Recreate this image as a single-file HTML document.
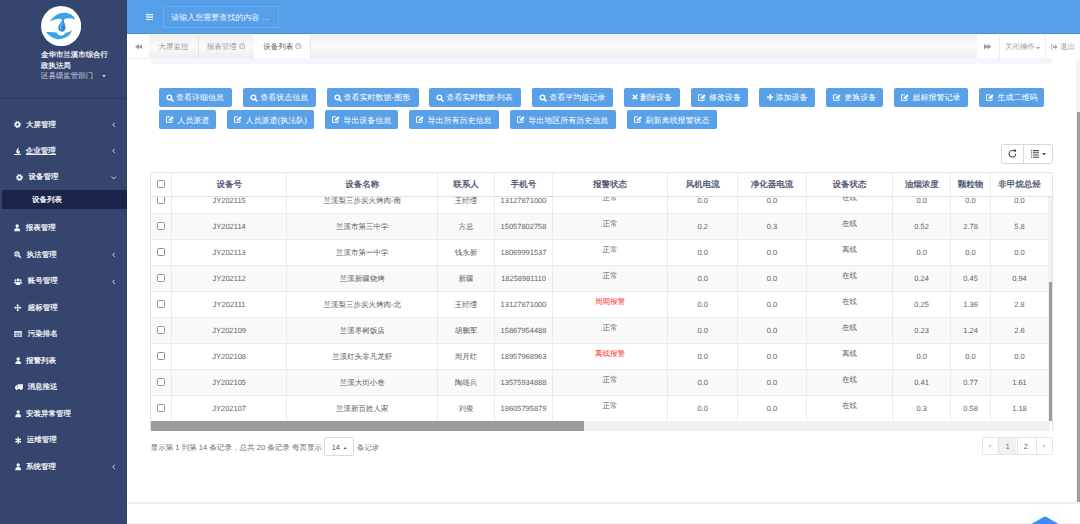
<!DOCTYPE html><html><head><meta charset="utf-8"><style>
*{box-sizing:border-box}
html,body{margin:0;padding:0}
body{width:1080px;height:524px;overflow:hidden;position:relative;background:#fff;font-family:"Liberation Sans",sans-serif;text-rendering:geometricPrecision}
.abs{position:absolute}
.t{position:absolute;white-space:nowrap;line-height:12px;height:12px}
.btn{position:absolute;height:18.9px;background:#58a0e8;border-radius:2px;color:#fff;font-size:8px;line-height:12px;white-space:nowrap}
.btn span{position:absolute;top:4.2px}
.mi{position:absolute;left:0;width:127px;height:14px;color:#f0f2f7;font-size:7.5px;font-weight:bold;line-height:14px;white-space:nowrap}
.mi .ic{position:absolute;top:0;height:14px;display:flex;align-items:center}
.mi .tx{position:absolute;top:0}
.mi .ar{position:absolute;left:111.8px;top:0;height:14px;display:flex;align-items:center}
.cell{position:absolute;height:12px;line-height:12px;text-align:center;font-size:7.5px;color:#5d6063;white-space:nowrap}
.hd{position:absolute;height:12px;line-height:12px;text-align:center;font-size:8.5px;font-weight:bold;color:#555c74;white-space:nowrap}
</style></head><body>
<div class="abs" style="left:0;top:0;width:127px;height:524px;background:rgb(54,69,109)">
<svg class="abs" style="left:41.2px;top:5.8px" width="40.2" height="40.2" viewBox="0 0 40 40"><circle cx="20" cy="20" r="20" fill="#fff"/><path d="M9 15.2C11 12 14.5 8.8 18.5 7.5C21.5 6.5 25 6.3 28.5 7.6C31 8.6 33 10.8 34.2 13.8C32 12.6 29.5 12 26.5 12.2C24.5 12.4 23 13.2 21.8 14.6C20.5 13 18.5 12.5 16 13C13.5 13.6 11 14.5 9 15.2Z" fill="#3aa5e6"/><path d="M5 26C7.5 29.5 11 32 15.5 32.8C20 33.5 25 32 28 29.2C29.5 27.6 30.3 26 30.8 24.2C28.5 25.8 26.5 26.3 24.6 26.6C23.5 28.2 22 29.3 19.8 29.3C17.5 29.3 16 27.8 15.6 26.3C12 25.7 8.5 25.6 5 26Z" fill="#3aa5e6"/><path d="M22.5 12.5C20.5 15.5 17.2 18.8 17.2 22C17.2 24.2 18.8 25.6 20.8 25.6C22.8 25.6 24.4 24.2 24.4 21.8C24.4 18.8 22.5 16 22.5 12.5Z" fill="#2e8ad6"/><path d="M21.6 16.5C20.2 18.3 19.3 19.8 19.3 21.5C19.3 22.5 19.8 23.2 20.4 23.4" fill="none" stroke="#8cc8f0" stroke-width="1"/></svg>
<div class="t" style="left:41px;top:48.8px;color:#f0f2f7;font-size:7.45px;font-weight:bold;line-height:11px;height:auto">金华市兰溪市综合行<br>政执法局</div>
<div class="t" style="left:41px;top:70px;color:#cdd3df;font-size:7.45px;line-height:11px;height:11px">区县级监管部门</div>
<svg class="abs" style="left:101.6px;top:75.2px" width="4" height="2.4" viewBox="0 0 8 5"><path d="M0 0H8L4 5Z" fill="#cdd3df"/></svg>
<div class="abs" style="left:0;top:97.6px;width:127px;height:1px;background:rgb(45,58,94)"></div>
<div class="abs" style="left:2px;top:190.2px;width:125px;height:18.6px;background:rgb(27,36,73)"></div>
<div class="mi" style="top:117.8px"><span class="ic" style="left:14.3px"><svg width="7" height="7" viewBox="0 0 14 14"><circle cx="7" cy="7" r="3.8" fill="none" stroke="#f3f5f9" stroke-width="3"/><circle cx="7" cy="7" r="5.8" fill="none" stroke="#f3f5f9" stroke-width="2.4" stroke-dasharray="2.3 2.25"/></svg></span><span class="tx" style="left:26px">大屏管理</span>
<span class="ar"><svg width="3.6" height="5.6" viewBox="0 0 7 11"><path d="M5.8 1L1.5 5.5L5.8 10" fill="none" stroke="#dfe3ea" stroke-width="1.8"/></svg></span>
</div>
<div class="mi" style="top:143.9px"><span class="ic" style="left:14.5px"><svg width="6" height="8" viewBox="0 0 12 16"><path d="M7.5 0.5C4.5 4 2 6.5 2.5 10C3 13 5.5 14.2 8 13.2C10.5 12 10.5 9 9.2 7C8.5 8.5 7.5 9 6.5 8.8C7.5 6 6.8 3.5 7.5 0.5Z" fill="#f3f5f9"/></svg></span><span class="tx" style="left:25.8px">企业管理</span>
<span class="ar"><svg width="3.6" height="5.6" viewBox="0 0 7 11"><path d="M5.8 1L1.5 5.5L5.8 10" fill="none" stroke="#dfe3ea" stroke-width="1.8"/></svg></span>
</div>
<div class="mi" style="top:170.4px"><span class="ic" style="left:16.2px"><svg width="7" height="7" viewBox="0 0 14 14"><circle cx="7" cy="7" r="3.8" fill="none" stroke="#f3f5f9" stroke-width="3"/><circle cx="7" cy="7" r="5.8" fill="none" stroke="#f3f5f9" stroke-width="2.4" stroke-dasharray="2.3 2.25"/></svg></span><span class="tx" style="left:28.6px">设备管理</span>
<span class="ar" style="left:110.6px"><svg width="5.6" height="3.6" viewBox="0 0 11 7"><path d="M1 1.2L5.5 5.5L10 1.2" fill="none" stroke="#dfe3ea" stroke-width="1.8"/></svg></span>
</div>
<div class="mi" style="top:221.0px"><span class="ic" style="left:14.3px"><svg width="6.4" height="7.4" viewBox="0 0 13 15"><circle cx="6.5" cy="4" r="3.4" fill="#f3f5f9"/><path d="M0.5 14.5C0.5 10 2.5 8 6.5 8C10.5 8 12.5 10 12.5 14.5Z" fill="#f3f5f9"/></svg></span><span class="tx" style="left:25.8px">报表管理</span>
</div>
<div class="mi" style="top:248.0px"><span class="ic" style="left:14.2px"><svg width="7.4" height="7.4" viewBox="0 0 15 15"><circle cx="6" cy="6" r="4.3" fill="none" stroke="#f3f5f9" stroke-width="2.2"/><path d="M9.3 9.3L13.8 13.8" stroke="#f3f5f9" stroke-width="3"/><path d="M3.8 6H8.2M6 3.8V8.2" stroke="#f3f5f9" stroke-width="1.5"/></svg></span><span class="tx" style="left:26.7px">执法管理</span>
<span class="ar"><svg width="3.6" height="5.6" viewBox="0 0 7 11"><path d="M5.8 1L1.5 5.5L5.8 10" fill="none" stroke="#dfe3ea" stroke-width="1.8"/></svg></span>
</div>
<div class="mi" style="top:274.3px"><span class="ic" style="left:14.2px"><svg width="8.2" height="7.4" viewBox="0 0 17 15"><circle cx="8.5" cy="3.6" r="2.8" fill="#f3f5f9"/><circle cx="3.2" cy="4.6" r="2.1" fill="#f3f5f9"/><circle cx="13.8" cy="4.6" r="2.1" fill="#f3f5f9"/><path d="M3.8 14.5C3.8 9.5 5.5 7.3 8.5 7.3C11.5 7.3 13.2 9.5 13.2 14.5Z" fill="#f3f5f9"/><path d="M0 11.5C0 8.5 1.5 7.3 3.2 7.3C4.2 7.3 4.8 7.7 5.2 8.2L3.5 11.5Z" fill="#f3f5f9"/><path d="M17 11.5C17 8.5 15.5 7.3 13.8 7.3C12.8 7.3 12.2 7.7 11.8 8.2L13.5 11.5Z" fill="#f3f5f9"/></svg></span><span class="tx" style="left:27.7px">账号管理</span>
<span class="ar"><svg width="3.6" height="5.6" viewBox="0 0 7 11"><path d="M5.8 1L1.5 5.5L5.8 10" fill="none" stroke="#dfe3ea" stroke-width="1.8"/></svg></span>
</div>
<div class="mi" style="top:300.9px"><span class="ic" style="left:14.2px"><svg width="7.4" height="7.4" viewBox="0 0 15 15"><path d="M7.5 2V13M2 7.5H13" stroke="#f3f5f9" stroke-width="2.2"/><path d="M7.5 0L4.5 3.3H10.5Z M7.5 15L4.5 11.7H10.5Z M0 7.5L3.3 4.5V10.5Z M15 7.5L11.7 4.5V10.5Z" fill="#f3f5f9"/></svg></span><span class="tx" style="left:27.7px">超标管理</span>
</div>
<div class="mi" style="top:326.9px"><span class="ic" style="left:14.3px"><svg width="8" height="6.4" viewBox="0 0 16 13"><rect x="0" y="0" width="16" height="13" fill="#f3f5f9" opacity="0.85"/><path d="M0.8 4.5H15.2M0.8 8.5H15.2M5.5 4.5V12.2M10.5 4.5V12.2" stroke="rgb(54,69,109)" stroke-width="1"/></svg></span><span class="tx" style="left:27.7px">污染排名</span>
</div>
<div class="mi" style="top:353.7px"><span class="ic" style="left:14.5px"><svg width="6.4" height="7.4" viewBox="0 0 13 15"><circle cx="6.5" cy="4" r="3.4" fill="#f3f5f9"/><path d="M0.5 14.5C0.5 10 2.5 8 6.5 8C10.5 8 12.5 10 12.5 14.5Z" fill="#f3f5f9"/></svg></span><span class="tx" style="left:26px">报警列表</span>
</div>
<div class="mi" style="top:380.2px"><span class="ic" style="left:14.5px"><svg width="8" height="6.4" viewBox="0 0 16 13"><path d="M5 0.5H16V10H5Z M0 5.5L2.5 2.5H4.5V10H0Z" fill="#f3f5f9"/><circle cx="3.5" cy="11" r="1.8" fill="#f3f5f9"/><circle cx="12" cy="11" r="1.8" fill="#f3f5f9"/></svg></span><span class="tx" style="left:27.5px">消息推送</span>
</div>
<div class="mi" style="top:406.9px"><span class="ic" style="left:14.5px"><svg width="6.4" height="7.4" viewBox="0 0 13 15"><circle cx="6.5" cy="4" r="3.4" fill="#f3f5f9"/><path d="M0.5 14.5C0.5 10 2.5 8 6.5 8C10.5 8 12.5 10 12.5 14.5Z" fill="#f3f5f9"/></svg></span><span class="tx" style="left:26px">安装异常管理</span>
</div>
<div class="mi" style="top:433.3px"><span class="ic" style="left:15px"><svg width="6.4" height="7" viewBox="0 0 13 14"><path d="M6.5 0.5V13.5M1 3.8L12 10.2M12 3.8L1 10.2" stroke="#f3f5f9" stroke-width="2.8"/></svg></span><span class="tx" style="left:26.7px">运维管理</span>
</div>
<div class="mi" style="top:459.9px"><span class="ic" style="left:14.5px"><svg width="6.4" height="7.4" viewBox="0 0 13 15"><circle cx="6.5" cy="4" r="3.4" fill="#f3f5f9"/><path d="M0.5 14.5C0.5 10 2.5 8 6.5 8C10.5 8 12.5 10 12.5 14.5Z" fill="#f3f5f9"/></svg></span><span class="tx" style="left:26px">系统管理</span>
<span class="ar"><svg width="3.6" height="5.6" viewBox="0 0 7 11"><path d="M5.8 1L1.5 5.5L5.8 10" fill="none" stroke="#dfe3ea" stroke-width="1.8"/></svg></span>
</div>
<div class="mi" style="top:192.8px"><span class="tx" style="left:32px">设备列表</span></div>
<div class="abs" style="left:14.3px;top:153.9px;width:6.5px;height:0.8px;background:#e6e9f0"></div>
<div class="abs" style="left:25.8px;top:153.9px;width:30.5px;height:0.8px;background:#e6e9f0"></div>
</div>
<div class="abs" style="left:127px;top:0;width:953px;height:34.4px;background:#56a0e9;border-bottom:0.6px solid #4a93e0"></div>
<svg class="abs" style="left:146px;top:13.8px" width="7.3" height="6.2" viewBox="0 0 14 12"><path d="M0 1.2H14M0 6H14M0 10.8H14" stroke="#fff" stroke-width="2.2"/></svg>
<div class="abs" style="left:163px;top:5.8px;width:116px;height:22.5px;border:0.8px solid rgba(255,255,255,0.14)"></div>
<div class="t" style="left:171.2px;top:12px;font-size:8px;color:#eef4fc">请输入您需要查找的内容 …</div>
<div class="abs" style="left:149px;top:34.6px;width:828px;height:23.3px;background:linear-gradient(#eeeeee,#fbfbfb 50%,#eeeeee)"></div>
<div class="abs" style="left:197.6px;top:34.6px;width:1px;height:23.3px;background:#e4e4e4"></div>
<div class="abs" style="left:254.4px;top:34.6px;width:55.8px;height:23.3px;background:#fff"></div>
<div class="abs" style="left:310.2px;top:34.6px;width:1px;height:23.3px;background:#e8e8e8"></div>
<div class="abs" style="left:999.4px;top:34.6px;width:0.8px;height:23.3px;background:#ebebeb"></div>
<div class="abs" style="left:1045.3px;top:34.6px;width:0.8px;height:23.3px;background:#ebebeb"></div>
<div class="abs" style="left:127px;top:57.6px;width:22px;height:0.6px;background:#eeeeee"></div>
<div class="t" style="left:158.5px;top:41.1px;font-size:7.5px;color:#949494">大屏监控</div>
<div class="t" style="left:206.7px;top:41.1px;font-size:7.5px;color:#949494">报表管理</div>
<div class="t" style="left:263.3px;top:41.1px;font-size:7.5px;color:#555">设备列表</div>
<svg class="abs" style="left:238.9px;top:43px" width="6.4" height="6.4" viewBox="0 0 12 12"><circle cx="6" cy="6" r="4.8" fill="none" stroke="#c2c2c2" stroke-width="2.2"/><path d="M4.2 4.2L7.8 7.8M7.8 4.2L4.2 7.8" stroke="#c2c2c2" stroke-width="1.6"/></svg>
<svg class="abs" style="left:295.3px;top:43px" width="6.4" height="6.4" viewBox="0 0 12 12"><circle cx="6" cy="6" r="4.8" fill="none" stroke="#c2c2c2" stroke-width="2.2"/><path d="M4.2 4.2L7.8 7.8M7.8 4.2L4.2 7.8" stroke="#c2c2c2" stroke-width="1.6"/></svg>
<svg class="abs" style="left:134.6px;top:44.4px" width="7.6" height="5.4" viewBox="0 0 14 10"><path d="M7.5 0L0 5L7.5 10Z M14 0L6.5 5L14 10Z" fill="#999999"/></svg>
<svg class="abs" style="left:983.8px;top:44.2px" width="7.4" height="5.4" viewBox="0 0 14 10"><path d="M0 0L7.5 5L0 10Z M6.5 0L14 5L6.5 10Z" fill="#999999"/></svg>
<div class="t" style="left:1005px;top:41.1px;font-size:7.5px;color:#a0a0a0">关闭操作</div>
<svg class="abs" style="left:1035.8px;top:46.6px" width="4" height="2.4" viewBox="0 0 8 5"><path d="M0 0H8L4 5Z" fill="#a0a0a0"/></svg>
<svg class="abs" style="left:1050.9px;top:43.6px" width="7" height="6" viewBox="0 0 14 12"><path d="M5 1.5H1.2V10.5H5" fill="none" stroke="#a8a8a8" stroke-width="1.6"/><path d="M4.2 4.2H8.2V1L13.6 6L8.2 11V7.8H4.2Z" fill="#a8a8a8"/></svg>
<div class="t" style="left:1060px;top:41.1px;font-size:7.5px;color:#a0a0a0">退出</div>
<div class="abs" style="left:151px;top:58.2px;width:901.2px;height:6.2px;background:#f3f6fc"></div>
<div class="btn" style="left:159px;top:87.9px;width:72.7px"><svg width="8" height="8" viewBox="0 0 16 16" style="position:absolute;left:7px;top:6.2px"><circle cx="6.8" cy="6.8" r="4.6" fill="none" stroke="#fff" stroke-width="2.8"/><path d="M10.2 10.2L14 14" stroke="#fff" stroke-width="3" stroke-linecap="round"/></svg><span style="left:16.9px">查看详细信息</span></div>
<div class="btn" style="left:243.3px;top:87.9px;width:72.4px"><svg width="8" height="8" viewBox="0 0 16 16" style="position:absolute;left:7px;top:6.2px"><circle cx="6.8" cy="6.8" r="4.6" fill="none" stroke="#fff" stroke-width="2.8"/><path d="M10.2 10.2L14 14" stroke="#fff" stroke-width="3" stroke-linecap="round"/></svg><span style="left:16.9px">查看状态信息</span></div>
<div class="btn" style="left:326.7px;top:87.9px;width:92.0px"><svg width="8" height="8" viewBox="0 0 16 16" style="position:absolute;left:7px;top:6.2px"><circle cx="6.8" cy="6.8" r="4.6" fill="none" stroke="#fff" stroke-width="2.8"/><path d="M10.2 10.2L14 14" stroke="#fff" stroke-width="3" stroke-linecap="round"/></svg><span style="left:16.9px">查看实时数据-图形</span></div>
<div class="btn" style="left:429.3px;top:87.9px;width:91.7px"><svg width="8" height="8" viewBox="0 0 16 16" style="position:absolute;left:7px;top:6.2px"><circle cx="6.8" cy="6.8" r="4.6" fill="none" stroke="#fff" stroke-width="2.8"/><path d="M10.2 10.2L14 14" stroke="#fff" stroke-width="3" stroke-linecap="round"/></svg><span style="left:16.9px">查看实时数据-列表</span></div>
<div class="btn" style="left:532.3px;top:87.9px;width:80.4px"><svg width="8" height="8" viewBox="0 0 16 16" style="position:absolute;left:7px;top:6.2px"><circle cx="6.8" cy="6.8" r="4.6" fill="none" stroke="#fff" stroke-width="2.8"/><path d="M10.2 10.2L14 14" stroke="#fff" stroke-width="3" stroke-linecap="round"/></svg><span style="left:16.9px">查看平均值记录</span></div>
<div class="btn" style="left:624.3px;top:87.9px;width:55.7px"><svg width="6" height="6" viewBox="0 0 12 12" style="position:absolute;left:7.8px;top:6.6px"><path d="M1.5 1.5L10.5 10.5M10.5 1.5L1.5 10.5" stroke="#fff" stroke-width="3.2"/></svg><span style="left:15.8px">删除设备</span></div>
<div class="btn" style="left:690.7px;top:87.9px;width:57.6px"><svg width="8.4" height="7" viewBox="0 0 17 14" style="position:absolute;left:7.2px;top:6px"><path d="M8 1.5H1.2V12.8H12.2V7.5" fill="none" stroke="#fff" stroke-width="1.9"/><path d="M5.5 9.5L6.2 6.5L12.5 0.3L15.5 3.3L9 9.3Z" fill="#fff"/></svg><span style="left:18.2px">修改设备</span></div>
<div class="btn" style="left:759.3px;top:87.9px;width:55.7px"><svg width="6.6" height="6.6" viewBox="0 0 13 13" style="position:absolute;left:7.3px;top:6.2px"><path d="M6.5 0V13M0 6.5H13" stroke="#fff" stroke-width="3.2"/></svg><span style="left:16.1px">添加设备</span></div>
<div class="btn" style="left:826px;top:87.9px;width:56.8px"><svg width="8.4" height="7" viewBox="0 0 17 14" style="position:absolute;left:7.2px;top:6px"><path d="M8 1.5H1.2V12.8H12.2V7.5" fill="none" stroke="#fff" stroke-width="1.9"/><path d="M5.5 9.5L6.2 6.5L12.5 0.3L15.5 3.3L9 9.3Z" fill="#fff"/></svg><span style="left:18.2px">更换设备</span></div>
<div class="btn" style="left:894.2px;top:87.9px;width:73.8px"><svg width="8.4" height="7" viewBox="0 0 17 14" style="position:absolute;left:7.2px;top:6px"><path d="M8 1.5H1.2V12.8H12.2V7.5" fill="none" stroke="#fff" stroke-width="1.9"/><path d="M5.5 9.5L6.2 6.5L12.5 0.3L15.5 3.3L9 9.3Z" fill="#fff"/></svg><span style="left:18.2px">超标报警记录</span></div>
<div class="btn" style="left:979.2px;top:87.9px;width:64.8px"><svg width="8.4" height="7" viewBox="0 0 17 14" style="position:absolute;left:7.2px;top:6px"><path d="M8 1.5H1.2V12.8H12.2V7.5" fill="none" stroke="#fff" stroke-width="1.9"/><path d="M5.5 9.5L6.2 6.5L12.5 0.3L15.5 3.3L9 9.3Z" fill="#fff"/></svg><span style="left:18.2px">生成二维码</span></div>
<div class="btn" style="left:159px;top:110.4px;width:57.0px"><svg width="8.4" height="7" viewBox="0 0 17 14" style="position:absolute;left:7.2px;top:6px"><path d="M8 1.5H1.2V12.8H12.2V7.5" fill="none" stroke="#fff" stroke-width="1.9"/><path d="M5.5 9.5L6.2 6.5L12.5 0.3L15.5 3.3L9 9.3Z" fill="#fff"/></svg><span style="left:18.2px">人员派遣</span></div>
<div class="btn" style="left:227.3px;top:110.4px;width:86.7px"><svg width="8.4" height="7" viewBox="0 0 17 14" style="position:absolute;left:7.2px;top:6px"><path d="M8 1.5H1.2V12.8H12.2V7.5" fill="none" stroke="#fff" stroke-width="1.9"/><path d="M5.5 9.5L6.2 6.5L12.5 0.3L15.5 3.3L9 9.3Z" fill="#fff"/></svg><span style="left:18.2px">人员派遣(执法队)</span></div>
<div class="btn" style="left:325px;top:110.4px;width:73.3px"><svg width="8.4" height="7" viewBox="0 0 17 14" style="position:absolute;left:7.2px;top:6px"><path d="M8 1.5H1.2V12.8H12.2V7.5" fill="none" stroke="#fff" stroke-width="1.9"/><path d="M5.5 9.5L6.2 6.5L12.5 0.3L15.5 3.3L9 9.3Z" fill="#fff"/></svg><span style="left:18.2px">导出设备信息</span></div>
<div class="btn" style="left:409.3px;top:110.4px;width:90.0px"><svg width="8.4" height="7" viewBox="0 0 17 14" style="position:absolute;left:7.2px;top:6px"><path d="M8 1.5H1.2V12.8H12.2V7.5" fill="none" stroke="#fff" stroke-width="1.9"/><path d="M5.5 9.5L6.2 6.5L12.5 0.3L15.5 3.3L9 9.3Z" fill="#fff"/></svg><span style="left:18.2px">导出所有历史信息</span></div>
<div class="btn" style="left:510px;top:110.4px;width:106.0px"><svg width="8.4" height="7" viewBox="0 0 17 14" style="position:absolute;left:7.2px;top:6px"><path d="M8 1.5H1.2V12.8H12.2V7.5" fill="none" stroke="#fff" stroke-width="1.9"/><path d="M5.5 9.5L6.2 6.5L12.5 0.3L15.5 3.3L9 9.3Z" fill="#fff"/></svg><span style="left:18.2px">导出地区所有历史信息</span></div>
<div class="btn" style="left:627.3px;top:110.4px;width:89.4px"><svg width="8.4" height="7" viewBox="0 0 17 14" style="position:absolute;left:7.2px;top:6px"><path d="M8 1.5H1.2V12.8H12.2V7.5" fill="none" stroke="#fff" stroke-width="1.9"/><path d="M5.5 9.5L6.2 6.5L12.5 0.3L15.5 3.3L9 9.3Z" fill="#fff"/></svg><span style="left:18.2px">刷新离线报警状态</span></div>
<div class="abs" style="left:1001.3px;top:144.1px;width:52.2px;height:19.5px;border:0.9px solid #d9d9d9;border-radius:2.5px;background:#fff"></div>
<div class="abs" style="left:1023.1px;top:144.1px;width:0.9px;height:19.5px;background:#d9d9d9"></div>
<svg class="abs" style="left:1008.2px;top:148.7px" width="8.6" height="9" viewBox="0 0 16 17"><path d="M14.3 9A6.2 6.2 0 1 1 11.6 3.9" fill="none" stroke="#3d4150" stroke-width="1.9"/><path d="M9.3 1.2L15.2 0.8L14.6 6.8Z" fill="#3d4150"/></svg>
<svg class="abs" style="left:1030.8px;top:149.8px" width="8.4" height="7.8" viewBox="0 0 16 15"><path d="M0 1.2H2M0 5.4H2M0 9.6H2M0 13.8H2M3.5 1.2H16M3.5 5.4H16M3.5 9.6H16M3.5 13.8H16" stroke="#4a4a5a" stroke-width="2"/></svg>
<svg class="abs" style="left:1041.7px;top:152.9px" width="4.2" height="2.4" viewBox="0 0 8 5"><path d="M0 0H8L4 5Z" fill="#4a4a55"/></svg>
<div class="abs" style="left:149.9px;top:172.2px;width:903.3px;height:259.3px;border:0.9px solid #e2e2e2;border-bottom:none;border-radius:3px 3px 0 0;overflow:hidden;background:#fff">
<div class="abs" style="left:0;top:14.0px;width:897.6px;height:26px;background:#fff;border-top:0.9px solid #eaeaea"></div>
<div class="abs" style="left:0;top:40.0px;width:897.6px;height:26px;background:#f9f9f9;border-top:0.9px solid #eaeaea"></div>
<div class="abs" style="left:0;top:66.0px;width:897.6px;height:26px;background:#fff;border-top:0.9px solid #eaeaea"></div>
<div class="abs" style="left:0;top:92.0px;width:897.6px;height:26px;background:#f9f9f9;border-top:0.9px solid #eaeaea"></div>
<div class="abs" style="left:0;top:118.0px;width:897.6px;height:26px;background:#fff;border-top:0.9px solid #eaeaea"></div>
<div class="abs" style="left:0;top:144.0px;width:897.6px;height:26px;background:#f9f9f9;border-top:0.9px solid #eaeaea"></div>
<div class="abs" style="left:0;top:170.0px;width:897.6px;height:26px;background:#fff;border-top:0.9px solid #eaeaea"></div>
<div class="abs" style="left:0;top:196.0px;width:897.6px;height:26px;background:#f9f9f9;border-top:0.9px solid #eaeaea"></div>
<div class="abs" style="left:0;top:222.0px;width:897.6px;height:26px;background:#fff;border-top:0.9px solid #eaeaea"></div>
<div class="abs" style="left:20.2px;top:0;width:0.9px;height:248px;background:#ebebeb"></div>
<div class="abs" style="left:135.5px;top:0;width:0.9px;height:248px;background:#ebebeb"></div>
<div class="abs" style="left:286.3px;top:0;width:0.9px;height:248px;background:#ebebeb"></div>
<div class="abs" style="left:343.2px;top:0;width:0.9px;height:248px;background:#ebebeb"></div>
<div class="abs" style="left:401.3px;top:0;width:0.9px;height:248px;background:#ebebeb"></div>
<div class="abs" style="left:516.3px;top:0;width:0.9px;height:248px;background:#ebebeb"></div>
<div class="abs" style="left:586.4px;top:0;width:0.9px;height:248px;background:#ebebeb"></div>
<div class="abs" style="left:655.2px;top:0;width:0.9px;height:248px;background:#ebebeb"></div>
<div class="abs" style="left:741.3px;top:0;width:0.9px;height:248px;background:#ebebeb"></div>
<div class="abs" style="left:799.4px;top:0;width:0.9px;height:248px;background:#ebebeb"></div>
<div class="abs" style="left:839.1px;top:0;width:0.9px;height:248px;background:#ebebeb"></div>
<div class="abs" style="left:6.2px;top:23.0px;width:7.6px;height:7.6px;border:0.9px solid #8f8f8f;border-radius:1.5px;background:#fff"></div>
<div class="cell" style="left:20.6px;top:21.9px;width:115.3px;">JY202115</div>
<div class="cell" style="left:135.9px;top:21.5px;width:150.8px;">兰溪梨三步炭火烤肉-南</div>
<div class="cell" style="left:286.7px;top:21.5px;width:56.9px;">王经理</div>
<div class="cell" style="left:343.6px;top:21.9px;width:58.1px;">13127871000</div>
<div class="cell" style="left:401.7px;top:18.7px;width:115.0px;">正常</div>
<div class="cell" style="left:516.7px;top:21.9px;width:70.1px;">0.0</div>
<div class="cell" style="left:586.8px;top:21.9px;width:68.8px;">0.0</div>
<div class="cell" style="left:655.6px;top:18.7px;width:86.1px;">在线</div>
<div class="cell" style="left:741.7px;top:21.9px;width:58.1px;">0.0</div>
<div class="cell" style="left:799.8px;top:21.9px;width:39.7px;">0.0</div>
<div class="cell" style="left:839.5px;top:21.9px;width:58.1px;">0.0</div>
<div class="abs" style="left:6.2px;top:49.0px;width:7.6px;height:7.6px;border:0.9px solid #8f8f8f;border-radius:1.5px;background:#fff"></div>
<div class="cell" style="left:20.6px;top:47.9px;width:115.3px;">JY202114</div>
<div class="cell" style="left:135.9px;top:47.5px;width:150.8px;">兰溪市第三中学</div>
<div class="cell" style="left:286.7px;top:47.5px;width:56.9px;">方总</div>
<div class="cell" style="left:343.6px;top:47.9px;width:58.1px;">15057802758</div>
<div class="cell" style="left:401.7px;top:44.7px;width:115.0px;">正常</div>
<div class="cell" style="left:516.7px;top:47.9px;width:70.1px;">0.2</div>
<div class="cell" style="left:586.8px;top:47.9px;width:68.8px;">0.3</div>
<div class="cell" style="left:655.6px;top:44.7px;width:86.1px;">在线</div>
<div class="cell" style="left:741.7px;top:47.9px;width:58.1px;">0.52</div>
<div class="cell" style="left:799.8px;top:47.9px;width:39.7px;">2.78</div>
<div class="cell" style="left:839.5px;top:47.9px;width:58.1px;">5.8</div>
<div class="abs" style="left:6.2px;top:75.0px;width:7.6px;height:7.6px;border:0.9px solid #8f8f8f;border-radius:1.5px;background:#fff"></div>
<div class="cell" style="left:20.6px;top:73.9px;width:115.3px;">JY202113</div>
<div class="cell" style="left:135.9px;top:73.5px;width:150.8px;">兰溪市第一中学</div>
<div class="cell" style="left:286.7px;top:73.5px;width:56.9px;">钱永新</div>
<div class="cell" style="left:343.6px;top:73.9px;width:58.1px;">18069991537</div>
<div class="cell" style="left:401.7px;top:70.7px;width:115.0px;">正常</div>
<div class="cell" style="left:516.7px;top:73.9px;width:70.1px;">0.0</div>
<div class="cell" style="left:586.8px;top:73.9px;width:68.8px;">0.0</div>
<div class="cell" style="left:655.6px;top:70.7px;width:86.1px;">离线</div>
<div class="cell" style="left:741.7px;top:73.9px;width:58.1px;">0.0</div>
<div class="cell" style="left:799.8px;top:73.9px;width:39.7px;">0.0</div>
<div class="cell" style="left:839.5px;top:73.9px;width:58.1px;">0.0</div>
<div class="abs" style="left:6.2px;top:101.0px;width:7.6px;height:7.6px;border:0.9px solid #8f8f8f;border-radius:1.5px;background:#fff"></div>
<div class="cell" style="left:20.6px;top:99.9px;width:115.3px;">JY202112</div>
<div class="cell" style="left:135.9px;top:99.5px;width:150.8px;">兰溪新疆烧烤</div>
<div class="cell" style="left:286.7px;top:99.5px;width:56.9px;">新疆</div>
<div class="cell" style="left:343.6px;top:99.9px;width:58.1px;">18258981110</div>
<div class="cell" style="left:401.7px;top:96.7px;width:115.0px;">正常</div>
<div class="cell" style="left:516.7px;top:99.9px;width:70.1px;">0.0</div>
<div class="cell" style="left:586.8px;top:99.9px;width:68.8px;">0.0</div>
<div class="cell" style="left:655.6px;top:96.7px;width:86.1px;">在线</div>
<div class="cell" style="left:741.7px;top:99.9px;width:58.1px;">0.24</div>
<div class="cell" style="left:799.8px;top:99.9px;width:39.7px;">0.45</div>
<div class="cell" style="left:839.5px;top:99.9px;width:58.1px;">0.94</div>
<div class="abs" style="left:6.2px;top:127.0px;width:7.6px;height:7.6px;border:0.9px solid #8f8f8f;border-radius:1.5px;background:#fff"></div>
<div class="cell" style="left:20.6px;top:125.9px;width:115.3px;">JY202111</div>
<div class="cell" style="left:135.9px;top:125.5px;width:150.8px;">兰溪梨三步炭火烤肉-北</div>
<div class="cell" style="left:286.7px;top:125.5px;width:56.9px;">王经理</div>
<div class="cell" style="left:343.6px;top:125.9px;width:58.1px;">13127871000</div>
<div class="cell" style="left:401.7px;top:122.7px;width:115.0px;color:#f22;">周期报警</div>
<div class="cell" style="left:516.7px;top:125.9px;width:70.1px;">0.0</div>
<div class="cell" style="left:586.8px;top:125.9px;width:68.8px;">0.0</div>
<div class="cell" style="left:655.6px;top:122.7px;width:86.1px;">在线</div>
<div class="cell" style="left:741.7px;top:125.9px;width:58.1px;">0.25</div>
<div class="cell" style="left:799.8px;top:125.9px;width:39.7px;">1.36</div>
<div class="cell" style="left:839.5px;top:125.9px;width:58.1px;">2.8</div>
<div class="abs" style="left:6.2px;top:153.0px;width:7.6px;height:7.6px;border:0.9px solid #8f8f8f;border-radius:1.5px;background:#fff"></div>
<div class="cell" style="left:20.6px;top:151.9px;width:115.3px;">JY202109</div>
<div class="cell" style="left:135.9px;top:151.5px;width:150.8px;">兰溪枣树饭店</div>
<div class="cell" style="left:286.7px;top:151.5px;width:56.9px;">胡鹏军</div>
<div class="cell" style="left:343.6px;top:151.9px;width:58.1px;">15867954488</div>
<div class="cell" style="left:401.7px;top:148.7px;width:115.0px;">正常</div>
<div class="cell" style="left:516.7px;top:151.9px;width:70.1px;">0.0</div>
<div class="cell" style="left:586.8px;top:151.9px;width:68.8px;">0.0</div>
<div class="cell" style="left:655.6px;top:148.7px;width:86.1px;">在线</div>
<div class="cell" style="left:741.7px;top:151.9px;width:58.1px;">0.23</div>
<div class="cell" style="left:799.8px;top:151.9px;width:39.7px;">1.24</div>
<div class="cell" style="left:839.5px;top:151.9px;width:58.1px;">2.6</div>
<div class="abs" style="left:6.2px;top:179.0px;width:7.6px;height:7.6px;border:0.9px solid #8f8f8f;border-radius:1.5px;background:#fff"></div>
<div class="cell" style="left:20.6px;top:177.9px;width:115.3px;">JY202108</div>
<div class="cell" style="left:135.9px;top:177.5px;width:150.8px;">兰溪红头非凡龙虾</div>
<div class="cell" style="left:286.7px;top:177.5px;width:56.9px;">周月红</div>
<div class="cell" style="left:343.6px;top:177.9px;width:58.1px;">18957968963</div>
<div class="cell" style="left:401.7px;top:174.7px;width:115.0px;color:#f22;">离线报警</div>
<div class="cell" style="left:516.7px;top:177.9px;width:70.1px;">0.0</div>
<div class="cell" style="left:586.8px;top:177.9px;width:68.8px;">0.0</div>
<div class="cell" style="left:655.6px;top:174.7px;width:86.1px;">离线</div>
<div class="cell" style="left:741.7px;top:177.9px;width:58.1px;">0.0</div>
<div class="cell" style="left:799.8px;top:177.9px;width:39.7px;">0.0</div>
<div class="cell" style="left:839.5px;top:177.9px;width:58.1px;">0.0</div>
<div class="abs" style="left:6.2px;top:205.0px;width:7.6px;height:7.6px;border:0.9px solid #8f8f8f;border-radius:1.5px;background:#fff"></div>
<div class="cell" style="left:20.6px;top:203.9px;width:115.3px;">JY202105</div>
<div class="cell" style="left:135.9px;top:203.5px;width:150.8px;">兰溪大街小巷</div>
<div class="cell" style="left:286.7px;top:203.5px;width:56.9px;">陶雄兵</div>
<div class="cell" style="left:343.6px;top:203.9px;width:58.1px;">13575934888</div>
<div class="cell" style="left:401.7px;top:200.7px;width:115.0px;">正常</div>
<div class="cell" style="left:516.7px;top:203.9px;width:70.1px;">0.0</div>
<div class="cell" style="left:586.8px;top:203.9px;width:68.8px;">0.0</div>
<div class="cell" style="left:655.6px;top:200.7px;width:86.1px;">在线</div>
<div class="cell" style="left:741.7px;top:203.9px;width:58.1px;">0.41</div>
<div class="cell" style="left:799.8px;top:203.9px;width:39.7px;">0.77</div>
<div class="cell" style="left:839.5px;top:203.9px;width:58.1px;">1.61</div>
<div class="abs" style="left:6.2px;top:231.0px;width:7.6px;height:7.6px;border:0.9px solid #8f8f8f;border-radius:1.5px;background:#fff"></div>
<div class="cell" style="left:20.6px;top:229.9px;width:115.3px;">JY202107</div>
<div class="cell" style="left:135.9px;top:229.5px;width:150.8px;">兰溪新百姓人家</div>
<div class="cell" style="left:286.7px;top:229.5px;width:56.9px;">刘俊</div>
<div class="cell" style="left:343.6px;top:229.9px;width:58.1px;">18605795879</div>
<div class="cell" style="left:401.7px;top:226.7px;width:115.0px;">正常</div>
<div class="cell" style="left:516.7px;top:229.9px;width:70.1px;">0.0</div>
<div class="cell" style="left:586.8px;top:229.9px;width:68.8px;">0.0</div>
<div class="cell" style="left:655.6px;top:226.7px;width:86.1px;">在线</div>
<div class="cell" style="left:741.7px;top:229.9px;width:58.1px;">0.3</div>
<div class="cell" style="left:799.8px;top:229.9px;width:39.7px;">0.58</div>
<div class="cell" style="left:839.5px;top:229.9px;width:58.1px;">1.18</div>
<div class="abs" style="left:0;top:0;width:901.7px;height:23.4px;background:#fff;border-bottom:0.9px solid #e2e2e2"></div>
<div class="abs" style="left:20.2px;top:0;width:0.9px;height:23.4px;background:#ebebeb"></div>
<div class="abs" style="left:135.5px;top:0;width:0.9px;height:23.4px;background:#ebebeb"></div>
<div class="abs" style="left:286.3px;top:0;width:0.9px;height:23.4px;background:#ebebeb"></div>
<div class="abs" style="left:343.2px;top:0;width:0.9px;height:23.4px;background:#ebebeb"></div>
<div class="abs" style="left:401.3px;top:0;width:0.9px;height:23.4px;background:#ebebeb"></div>
<div class="abs" style="left:516.3px;top:0;width:0.9px;height:23.4px;background:#ebebeb"></div>
<div class="abs" style="left:586.4px;top:0;width:0.9px;height:23.4px;background:#ebebeb"></div>
<div class="abs" style="left:655.2px;top:0;width:0.9px;height:23.4px;background:#ebebeb"></div>
<div class="abs" style="left:741.3px;top:0;width:0.9px;height:23.4px;background:#ebebeb"></div>
<div class="abs" style="left:799.4px;top:0;width:0.9px;height:23.4px;background:#ebebeb"></div>
<div class="abs" style="left:839.1px;top:0;width:0.9px;height:23.4px;background:#ebebeb"></div>
<div class="abs" style="left:6.4px;top:7.3px;width:7.8px;height:7.6px;border:0.9px solid #8f8f8f;border-radius:1.5px;background:#fff"></div>
<div class="hd" style="left:20.6px;top:5.1px;width:115.3px">设备号</div>
<div class="hd" style="left:135.9px;top:5.1px;width:150.8px">设备名称</div>
<div class="hd" style="left:286.7px;top:5.1px;width:56.9px">联系人</div>
<div class="hd" style="left:343.6px;top:5.1px;width:58.1px">手机号</div>
<div class="hd" style="left:401.7px;top:5.1px;width:115.0px">报警状态</div>
<div class="hd" style="left:516.7px;top:5.1px;width:70.1px">风机电流</div>
<div class="hd" style="left:586.8px;top:5.1px;width:68.8px">净化器电流</div>
<div class="hd" style="left:655.6px;top:5.1px;width:86.1px">设备状态</div>
<div class="hd" style="left:741.7px;top:5.1px;width:58.1px">油烟浓度</div>
<div class="hd" style="left:799.8px;top:5.1px;width:39.7px">颗粒物</div>
<div class="hd" style="left:839.5px;top:5.1px;width:58.1px">非甲烷总烃</div>
<div class="abs" style="left:897.6px;top:23.9px;width:4.2px;height:224.1px;background:#f1f1f1"></div>
<div class="abs" style="left:897.9px;top:109.3px;width:3.4px;height:139.0px;background:#9c9c9c"></div>
<div class="abs" style="left:0;top:248.0px;width:898.8px;height:10px;background:#f1f1f1"></div>
<div class="abs" style="left:0;top:248.0px;width:433.2px;height:10px;background:#9c9c9c"></div>
</div>
<div class="t" style="left:150.6px;top:441.8px;font-size:7.55px;color:#6f7173">显示第 1 到第 14 条记录，总共 20 条记录 每页显示</div>
<div class="abs" style="left:323.8px;top:437.2px;width:30.5px;height:19.3px;border:0.9px solid #dadada;border-radius:2px;background:#fff"></div>
<div class="t" style="left:331.7px;top:441.6px;font-size:7.5px;color:#555">14</div>
<svg class="abs" style="left:343px;top:446.6px" width="4.2" height="2.4" viewBox="0 0 8 5"><path d="M0 5H8L4 0Z" fill="#555"/></svg>
<div class="t" style="left:357px;top:441.8px;font-size:7.4px;color:#6f7173">条记录</div>
<div class="abs" style="left:981.5px;top:437px;width:71.1px;height:18.4px;border:0.9px solid #e3e3e3;border-radius:2.5px;background:#fff"></div>
<div class="abs" style="left:998.4px;top:437.9px;width:18.1px;height:16.6px;background:#f1f1f1"></div>
<div class="abs" style="left:998.4px;top:437px;width:0.9px;height:18.4px;background:#e3e3e3"></div>
<div class="abs" style="left:1016.5px;top:437px;width:0.9px;height:18.4px;background:#e3e3e3"></div>
<div class="abs" style="left:1035.5px;top:437px;width:0.9px;height:18.4px;background:#e3e3e3"></div>
<div class="t" style="left:981.6px;top:440.5px;width:17px;text-align:center;font-size:7px;color:#7a7a7a">‹</div>
<div class="t" style="left:998.7px;top:440.6px;width:17.8px;text-align:center;font-size:7.6px;color:#777">1</div>
<div class="t" style="left:1016.5px;top:440.6px;width:18.9px;text-align:center;font-size:7.6px;color:#666">2</div>
<div class="t" style="left:1035.4px;top:440.5px;width:17px;text-align:center;font-size:7px;color:#7a7a7a">›</div>
<div class="abs" style="left:1076px;top:58.6px;width:4px;height:444px;background:#f5f5f5"></div>
<div class="abs" style="left:1076.5px;top:111.8px;width:3.5px;height:390.8px;background:#9e9e9e"></div>
<div class="abs" style="left:127px;top:502.3px;width:953px;height:1.4px;background:#f1f1f1"></div>
<div class="abs" style="left:127px;top:523px;width:953px;height:1px;background:#eeeeee"></div>
<div class="abs" style="left:1028.8px;top:511px;width:32.2px;height:12px;background:#fcfcfc"></div>
<svg class="abs" style="left:1031px;top:516.2px" width="28" height="8" viewBox="0 0 28 8"><path d="M0.5 8L12.5 1Q14 0.2 15.5 1L27.5 8Z" fill="#3f8cf7"/></svg>
</body></html>
